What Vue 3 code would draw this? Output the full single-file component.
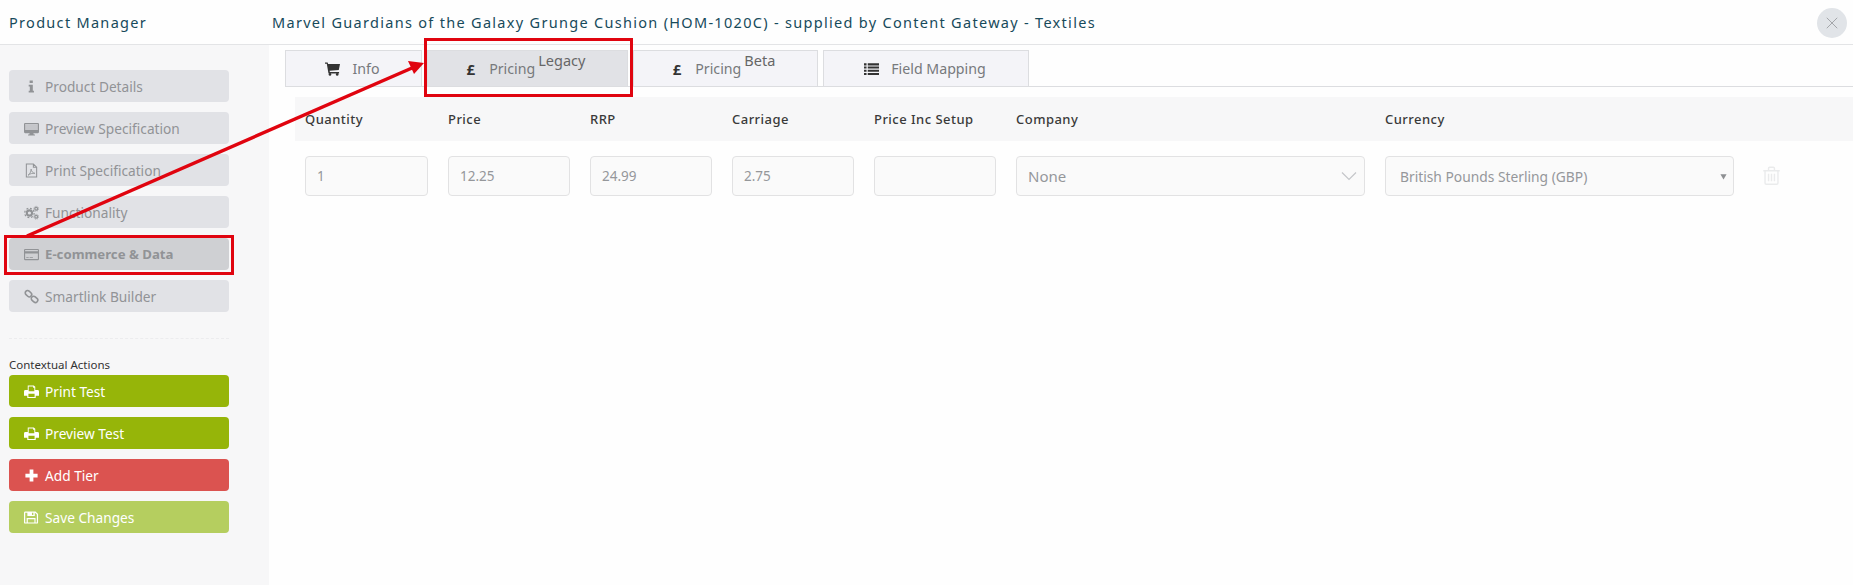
<script setup>
const icons = {
  info: '<path d="M6 1.5h3.4v2.8H6zM5 6h4.4v6.6h1.2v1.900H5v-1.900h1.200V7.900H5z"/>',
  desktop: '<path fill-rule="evenodd" d="M1.200 2h13.600A1.200 1.200 0 0 1 16 3.200v8.600a1.200 1.200 0 0 1-1.200 1.200H10l.4 1.400h1.300v1.100H4.300v-1.100h1.300L6 13H1.200A1.200 1.200 0 0 1 0 11.800V3.200A1.200 1.200 0 0 1 1.200 2zM1.300 3.300v6.400h13.400V3.300z"/><path opacity=".35" d="M1.300 3.300h13.400v6.400H1.300z"/>',
  pdf: '<path fill="none" stroke="currentColor" stroke-width="1.100" d="M2.500 1h7.500l3.500 3.500V15h-11zM10 1v3.500h3.500"/><path fill="none" stroke="currentColor" stroke-width=".9" d="M4.300 13c2-1 3-3.500 3.300-6.500.4 2.500 1.500 4 4 4.500-2.500-.2-5 .3-7.300 2z"/>',
  cogs: '<g fill="none" stroke="currentColor"><circle cx="5.800" cy="8.500" r="2.800" stroke-width="2.200"/><circle cx="5.800" cy="8.500" r="5" stroke-width="1.300" stroke-dasharray="2 1.930"/><circle cx="13" cy="4" r="1.500" stroke-width="1.300"/><circle cx="13" cy="4" r="2.600" stroke-width=".8" stroke-dasharray="1.100 .94"/><circle cx="13" cy="12.500" r="1.500" stroke-width="1.300"/><circle cx="13" cy="12.500" r="2.600" stroke-width=".8" stroke-dasharray="1.100 .94"/></g>',
  card: '<path fill-rule="evenodd" d="M1.300 2h13.400A1.300 1.300 0 0 1 16 3.300v9.400a1.300 1.300 0 0 1-1.300 1.300H1.300A1.300 1.300 0 0 1 0 12.700V3.300A1.300 1.300 0 0 1 1.300 2zM1.200 3.200v1.300h13.600V3.200zM1.200 7v5.800h13.600V7z"/><path d="M2.400 10.800h2.600v1H2.400zM6 10.800h3.500v1H6z"/>',
  link: '<g fill="none" stroke="currentColor" stroke-width="1.700"><rect x="1" y="2.500" width="7.500" height="5" rx="2.500" transform="rotate(42 4.700 5)"/><rect x="7.500" y="8.500" width="7.500" height="5" rx="2.500" transform="rotate(42 11.200 11)"/></g>',
  print: '<path fill-rule="evenodd" d="M4 1.500h6.500L12 3v3.500h2.500A1.500 1.500 0 0 1 16 8v4.500h-3.500V15h-9v-2.500H0V8a1.500 1.500 0 0 1 1.500-1.500H4zM5 2.700v5h6V4H9.700V2.700zM4.700 10.300v3.500h6.600v-3.500z"/>',
  plus: '<path d="M6 1.500h4V6h4.500v4H10v4.500H6V10H1.500V6H6z"/>',
  save: '<path fill-rule="evenodd" d="M1.300 1.500h11L15 4.200v9a1.300 1.300 0 0 1-1.300 1.300H1.300A1.300 1.300 0 0 1 0 13.200V2.800A1.300 1.300 0 0 1 1.300 1.500zM1.300 2.800v10.400h1.500V8.500h9.500v4.700h1.400V4.800l-2-2h-.200v3.700H3.600V2.800zM4.100 9.800v3.400h7v-3.400zM8.500 2.800v2.500h1.500V2.800z"/>',
  cart: '<path d="M0 1.500h2.800l.5 1.600H16l-1.300 6.400-9.800 1 .3 1.300h9.800v1.500H3.700L1.900 3H0z"/><circle cx="5.300" cy="14.300" r="1.400"/><circle cx="13" cy="14.300" r="1.400"/>',
  list: '<path d="M0 2.500h2.700v2.200H0zM4 2.500h12v2.200H4zM0 5.900h2.700v2.200H0zM4 5.900h12v2.200H4zM0 9.300h2.700v2.200H0zM4 9.300h12v2.200H4zM0 12.700h2.700v2.200H0zM4 12.700h12v2.200H4z"/>',
  trash: '<path fill="none" stroke="currentColor" stroke-width="1.200" d="M1 4h14M2.500 4v10.500a1 1 0 0 0 1 1h9a1 1 0 0 0 1-1V4M5.500 4V2a1 1 0 0 1 1-1h3a1 1 0 0 1 1 1v2M5.500 6.500v6.500M8 6.500v6.500M10.500 6.500v6.500"/>'
}

const navItems = [
  { label: 'Product Details', icon: 'info' },
  { label: 'Preview Specification', icon: 'desktop' },
  { label: 'Print Specification', icon: 'pdf' },
  { label: 'Functionality', icon: 'cogs' },
  { label: 'E-commerce & Data', icon: 'card', active: true },
  { label: 'Smartlink Builder', icon: 'link' }
]

const actions = [
  { label: 'Print Test', icon: 'print', tone: 'green' },
  { label: 'Preview Test', icon: 'print', tone: 'green' },
  { label: 'Add Tier', icon: 'plus', tone: 'red' },
  { label: 'Save Changes', icon: 'save', tone: 'pale' }
]

const tabs = [
  { label: 'Info', icon: 'cart', cls: 'w-info' },
  { label: 'Pricing', pound: true, sup: 'Legacy', cls: 'w-legacy', active: true },
  { label: 'Pricing', pound: true, sup: 'Beta', cls: 'w-beta' },
  { label: 'Field Mapping', icon: 'list', cls: 'w-map' }
]

const columns = ['Quantity', 'Price', 'RRP', 'Carriage', 'Price Inc Setup', 'Company', 'Currency']
const values = ['1', '12.25', '24.99', '2.75', '']
</script>

<template>
  <div class="page">
    <header class="top">
      <div class="brand">Product Manager</div>
      <div class="title">Marvel Guardians of the Galaxy Grunge Cushion (HOM-1020C) - supplied by Content Gateway - Textiles</div>
      <button class="close" aria-label="Close">
        <svg viewBox="0 0 16 16"><path d="M2 2l12 12M14 2L2 14" fill="none" stroke="#9a9da1" stroke-width="1"/></svg>
      </button>
    </header>

    <div class="body">
      <aside class="side">
        <nav class="nav">
          <div v-for="n in navItems" :key="n.label" class="btn nav-btn" :class="{ active: n.active }">
            <svg class="ico" viewBox="0 0 16 16" fill="currentColor" v-html="icons[n.icon]"></svg>
            <span>{{ n.label }}</span>
          </div>
        </nav>
        <div class="divider"></div>
        <div class="ctx">Contextual Actions</div>
        <div class="nav">
          <div v-for="a in actions" :key="a.label" class="btn act" :class="a.tone">
            <svg class="ico" viewBox="0 0 16 16" fill="currentColor" v-html="icons[a.icon]"></svg>
            <span>{{ a.label }}</span>
          </div>
        </div>
      </aside>

      <main class="main">
        <div class="tabs">
          <div v-for="t in tabs" :key="t.cls" class="tab" :class="[t.cls, { active: t.active }]">
            <b v-if="t.pound" class="pound">£</b>
            <svg v-else class="tab-ico" viewBox="0 0 16 16" fill="currentColor" v-html="icons[t.icon]"></svg>
            <span>{{ t.label }}</span>
            <span v-if="t.sup" class="sup">{{ t.sup }}</span>
          </div>
        </div>

        <div class="grid head">
          <div v-for="c in columns" :key="c">{{ c }}</div>
        </div>

        <div class="grid row">
          <div v-for="(v, i) in values" :key="i" class="field">{{ v }}</div>
          <div class="field company">
            <span>None</span>
            <svg class="chev" viewBox="0 0 16 10"><path d="M1 1.500l7 7 7-7" fill="none" stroke="#c4c6c9" stroke-width="1.200"/></svg>
          </div>
          <div class="field currency">
            <span>British Pounds Sterling (GBP)</span>
            <svg class="caret" viewBox="0 0 8 8"><path d="M.5 1.500h7L4 7.500z" fill="#8d8f92"/></svg>
          </div>
          <svg class="trash" viewBox="0 0 16 17" fill="#eaebec" v-html="icons.trash"></svg>
        </div>
      </main>
    </div>

    <svg class="annot" width="1853" height="585" viewBox="0 0 1853 585">
      <rect x="5.500" y="236.500" width="227" height="37" fill="none" stroke="#e0040f" stroke-width="3"/>
      <rect x="425.500" y="39.500" width="206" height="56" fill="none" stroke="#e0040f" stroke-width="3"/>
      <path d="M27 236L412 68" fill="none" stroke="#e0040f" stroke-width="3.500"/>
      <path d="M424 63L408 61L414 74z" fill="#e0040f"/>
    </svg>
  </div>
</template>

<style>
html, body { margin: 0; padding: 0; background: #fefefe; }
</style>

<style scoped>
.page {
  position: relative;
  width: 1853px;
  height: 585px;
  overflow: hidden;
  display: flex;
  flex-direction: column;
  background: #fefefe;
  font-family: "Noto Sans", "Open Sans", sans-serif;
}
.top {
  height: 44px;
  flex: none;
  display: flex;
  align-items: center;
  border-bottom: 1px solid #e3e4e6;
  color: #174a5b;
  font-size: 14.5px;
  letter-spacing: 1.300px;
}
.brand { width: 263px; padding-left: 9px; }
.title { flex: 1; }
.close {
  width: 30px;
  height: 30px;
  margin-right: 6px;
  margin-top: 1px;
  padding: 8px;
  border: 0;
  border-radius: 50%;
  background: #e1e4e8;
}
.close svg { display: block; width: 14px; height: 14px; }
.body { flex: 1; display: flex; min-height: 0; }
.side {
  width: 260px;
  flex: none;
  padding: 25px 0 0 9px;
  background: #f7f7f8;
}
.nav { width: 220px; display: flex; flex-direction: column; gap: 10px; }
.btn {
  height: 32px;
  display: flex;
  align-items: center;
  border-radius: 4px;
  font-size: 13.700px;
  box-sizing: border-box;
  padding-left: 15px;
}
.ico { width: 15px; height: 15px; flex: none; margin-right: 6px; }
.nav-btn { background: #e1e2e6; color: #919396; }
.nav-btn.active { background: #cfd0d3; font-weight: 700; font-size: 13.200px; }
.divider { width: 220px; margin-top: 26px; border-top: 1px dashed #ececee; }
.ctx { margin-top: 17px; height: 19px; line-height: 17px; font-size: 11.500px; color: #333; }
.act { color: #fff; }
.green { background: #96b509; }
.red { background: #db5350; }
.pale { background: #b5ce5f; }
.main { flex: 1; min-width: 0; padding: 5px 0 0 16px; }
.tabs {
  height: 37px;
  box-sizing: border-box;
  display: flex;
  gap: 5px;
  border-bottom: 1px solid #dcdde0;
}
.tab {
  height: 37px;
  box-sizing: border-box;
  border: 1px solid #dcdde0;
  background: #f4f4f8;
  display: flex;
  align-items: center;
  justify-content: center;
  color: #77797c;
  font-size: 14.200px;
  white-space: nowrap;
}
.tab.active { background: #e1e2e6; }
.w-info { width: 137px; padding-right: 2px; }
.w-legacy { width: 201px; padding-right: 3px; }
.w-beta { width: 185px; padding-right: 3px; }
.w-map { width: 206px; padding-right: 2px; }
.tab-ico { width: 15px; height: 15px; margin-right: 12px; color: #333; }
.pound { margin-right: 14px; color: #333; font-size: 15px; }
.sup { margin-left: 3px; margin-top: -17px; font-size: 14.500px; color: #666; }
.grid {
  display: grid;
  grid-template-columns: 123px repeat(4, 122px) 349px 349px 1fr;
  column-gap: 20px;
  padding-left: 10px;
}
.head {
  height: 44px;
  margin: 10px 0 0 10px;
  align-items: center;
  background: #f7f7f8;
  color: #3a3a3a;
  font-size: 13px;
  font-weight: 500;
  letter-spacing: .47px;
}
.row { margin: 15px 0 0 10px; align-items: center; }
.field {
  height: 40px;
  box-sizing: border-box;
  display: flex;
  align-items: center;
  padding: 0 11px;
  border: 1px solid #e2e2e3;
  border-radius: 4px;
  background: #fafafa;
  color: #95979a;
  font-size: 13.500px;
}
.company { justify-content: space-between; font-size: 15px; padding-right: 7px; }
.chev { width: 16px; height: 10px; }
.currency { justify-content: space-between; padding: 0 6px 0 14px; font-size: 13.800px; }
.caret { width: 7px; height: 7px; }
.trash { width: 19px; height: 20px; margin-left: 8px; color: #eaebec; }
.annot { position: absolute; left: 0; top: 0; pointer-events: none; }
</style>
